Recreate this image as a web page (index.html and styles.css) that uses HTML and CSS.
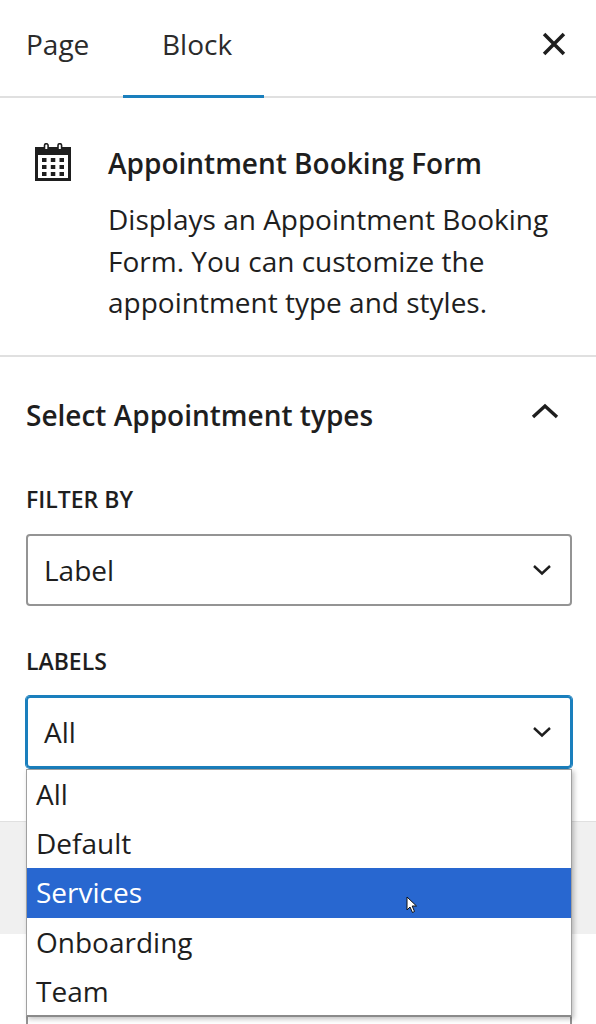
FILE: index.html
```html
<!DOCTYPE html>
<html lang="en">
<head>
<meta charset="utf-8">
<title>Block settings</title>
<link rel="stylesheet" href="styles.css">
</head>
<body>
<div class="sidebar">
  <header class="tabs">
    <div class="tab tab-page">Page</div>
    <div class="tab tab-block">Block</div>
    <svg class="close" viewBox="0 0 24 24" width="34" height="34"><path d="M5 5 19 19M19 5 5 19" fill="none" stroke="#1e1e1e" stroke-width="2.500"/></svg>
  </header>
  <section class="card">
    <svg class="cal" viewBox="0 0 38 38" width="38" height="38">
      <path d="M1 4h36v34H1z" fill="#1e1e1e"/>
      <path d="M4 12h30v23H4z" fill="#fff"/>
      <path d="M10.500 6V2.500a1.800 1.800 0 0 1 3.600 0V6M24 6V2.500a1.800 1.800 0 0 1 3.600 0V6" fill="#fff" stroke="#1e1e1e" stroke-width="1.600"/>
      <path d="M8 15h4.500v4H8zM16.800 15h4.500v4h-4.500zM25.500 15H30v4h-4.500zM8 22h4.500v4H8zM16.800 22h4.500v4h-4.500zM25.500 22H30v4h-4.500zM8 29h4.500v4H8zM16.800 29h4.500v4h-4.500zM25.500 29H30v4h-4.500z" fill="#1e1e1e"/>
    </svg>
    <div class="card-text">
      <h2 class="card-title">Appointment Booking Form</h2>
      <p class="card-desc">Displays an Appointment Booking Form. You can customize the appointment type and styles.</p>
    </div>
  </section>
  <section class="panel">
    <div class="panel-head">
      <h2 class="panel-title">Select Appointment types</h2>
      <svg class="chev-up" viewBox="0 0 28 16" width="28" height="16"><path d="M2 14 14 3 26 14" fill="none" stroke="#1e1e1e" stroke-width="3.400"/></svg>
    </div>
    <div class="field field-filter">
      <div class="label">Filter by</div>
      <div class="select">
        <span>Label</span>
        <svg class="chev" viewBox="0 0 20 12" width="20" height="12"><path d="M2 2 10 9.500 18 2" fill="none" stroke="#1e1e1e" stroke-width="2.400"/></svg>
      </div>
    </div>
    <div class="field field-labels">
      <div class="label">Labels</div>
      <div class="select select-focus">
        <span>All</span>
        <svg class="chev" viewBox="0 0 20 12" width="20" height="12"><path d="M2 2 10 9.500 18 2" fill="none" stroke="#1e1e1e" stroke-width="2.400"/></svg>
      </div>
      <ul class="dropdown">
        <li>All</li>
        <li>Default</li>
        <li class="active">Services</li>
        <li>Onboarding</li>
        <li>Team</li>
        <svg class="cursor" viewBox="0 0 12 18" width="12" height="18"><path d="M1 1v13l3-3 2.500 5.500 2-1L6.200 10H10.500z" fill="#fff" stroke="#111" stroke-width="1"/></svg>
      </ul>
    </div>
  </section>
  <div class="band"></div>
  <div class="next-field"></div>
</div>
</body>
</html>
```
FILE: styles.css
```css
* { box-sizing: border-box; }
html, body { margin: 0; height: 1024px; overflow: hidden; background: #fff; }
body { font-family: "Open Sans", "Noto Sans", sans-serif; color: #1e1e1e; }
.sidebar { width: 596px; height: 1024px; overflow: hidden; }
.tabs { height: 98px; display: flex; align-items: flex-start; border-bottom: 2px solid #e0e0e0; }
.tab { font-size: 28px; line-height: 36px; padding-top: 26px; color: #2b2b2b; }
.tab-page { margin-left: 26px; width: 97px; }
.tab-block { width: 141px; height: 98px; padding-left: 39px; border-bottom: 3px solid #1a7fbd; }
.close { margin-left: auto; margin-right: 25px; margin-top: 27px; }
.card { height: 259px; display: flex; padding: 45px 24px 0 34px; border-bottom: 2px solid #e0e0e0; }
.cal { flex: none; }
.card-text { margin-left: 36px; }
.card-title { margin: 0; font-size: 28px; line-height: 40px; font-weight: 600; }
.card-desc { margin: 16px 0 0; font-size: 28px; line-height: 41.500px; }
.panel { padding: 0 24px 0 26px; height: 465px; }
.panel-head { display: flex; justify-content: space-between; align-items: center; padding-top: 38px; height: 78px; }
.panel-title { margin: 0; font-size: 28px; line-height: 40px; font-weight: 600; }
.chev-up { margin-right: 13px; margin-top: -8px; }
.field { position: relative; }
.field-filter { margin-top: 48px; }
.field-labels { margin-top: 39px; }
.label { font-size: 23px; line-height: 32px; font-weight: 600; text-transform: uppercase; margin-bottom: 19px; }
.select { height: 72px; border: 2px solid #949494; border-radius: 4px; display: flex; align-items: center; justify-content: space-between; padding: 0 18px 0 16px; font-size: 28px; }
.select-focus { border-color: #1a7fbd; box-shadow: 0 0 0 1px #1a7fbd; }
.dropdown { position: absolute; left: 0; right: 0; top: 124px; margin: 0; padding: 0; list-style: none; background: #fff; border: 1px solid #a0a0a0; border-bottom: 2px solid #8a8a8a; box-shadow: 2px 2px 5px rgba(0,0,0,.25); z-index: 2; height: 248px; }
.dropdown li { height: 49.200px; line-height: 49px; font-size: 28px; padding-left: 9px; }
.dropdown .active { background: #2867d0; color: #fff; }
.cursor { position: absolute; left: 379px; top: 126px; }
.band { height: 113px; margin-top: -1px; background: #f0f0f0; border-top: 1px solid #e0e0e0; }
.next-field { margin: 76px 24px 0 26px; height: 40px; border: 2px solid #949494; border-radius: 4px; }
```
